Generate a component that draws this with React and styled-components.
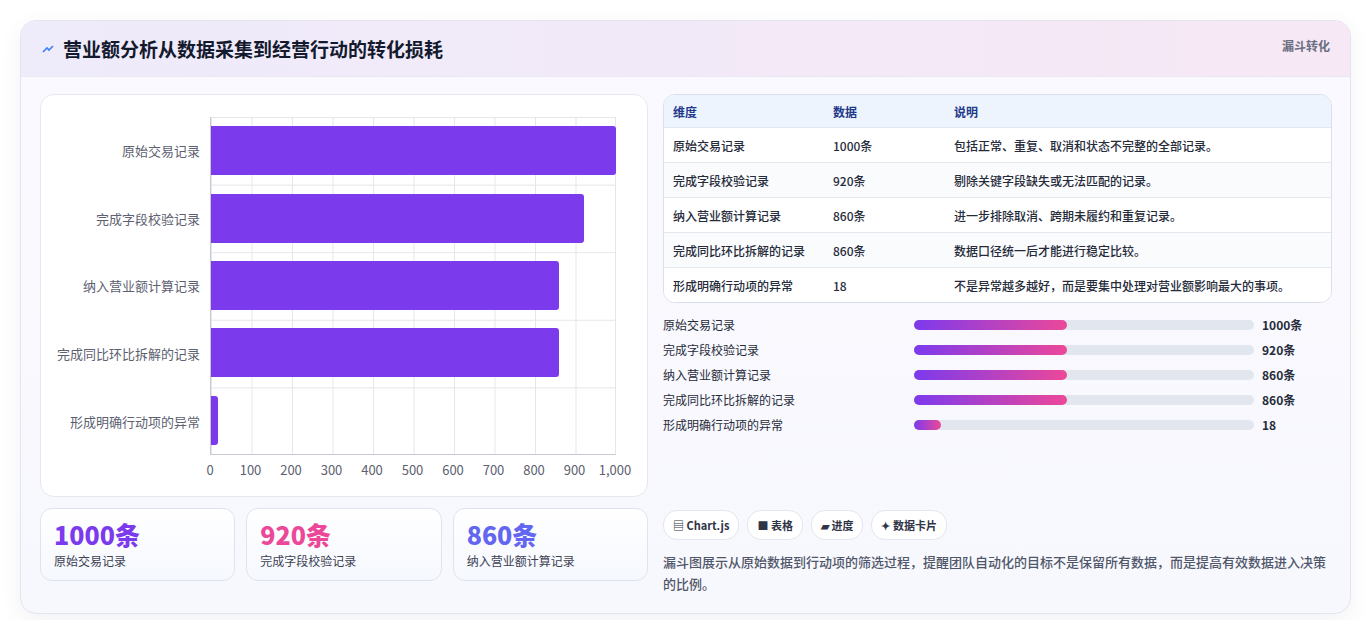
import React from 'react';
import styled, { createGlobalStyle } from 'styled-components';

const Global = createGlobalStyle`
  body { margin: 0; background: #fff; font-family: "Noto Sans CJK SC", "Noto Sans", sans-serif; }
`;

const rows = [
  { name: '原始交易记录', value: 1000, unit: '1000条', note: '包括正常、重复、取消和状态不完整的全部记录。', pct: 45 },
  { name: '完成字段校验记录', value: 920, unit: '920条', note: '剔除关键字段缺失或无法匹配的记录。', pct: 45 },
  { name: '纳入营业额计算记录', value: 860, unit: '860条', note: '进一步排除取消、跨期未履约和重复记录。', pct: 45 },
  { name: '完成同比环比拆解的记录', value: 860, unit: '860条', note: '数据口径统一后才能进行稳定比较。', pct: 45 },
  { name: '形成明确行动项的异常', value: 18, unit: '18', note: '不是异常越多越好，而是要集中处理对营业额影响最大的事项。', pct: 8 },
];

const Page = styled.div`
  padding: 20px 21px 20px 20px;
`;

const Card = styled.div`
  border: 1px solid #e4e4f0;
  border-radius: 16px;
  background: linear-gradient(180deg, #faf9ff, #f7f8fd);
  box-shadow: 0 6px 20px rgba(90, 90, 140, 0.08);
  overflow: hidden;
`;

const Header = styled.div`
  height: 55px;
  display: flex;
  align-items: center;
  justify-content: space-between;
  padding: 0 20px;
  background: linear-gradient(90deg, #eeebfb, #f7e8f5);
  border-bottom: 1px solid #ebe7f5;
`;

const Title = styled.h1`
  margin: 0;
  font-size: 19px;
  font-weight: 700;
  color: #141a2e;
  display: flex;
  align-items: center;
  gap: 8px;
`;

const Tag = styled.span`
  font-size: 12px;
  font-weight: 700;
  color: #6b6f80;
  align-self: flex-start;
  margin-top: 16px;
`;

const Body = styled.div`
  display: grid;
  grid-template-columns: 608px 1fr;
  gap: 15px;
  padding: 17px 18px 18px 19px;
`;

const Col = styled.div`
  display: flex;
  flex-direction: column;
`;

const ChartCard = styled.div`
  height: 403px;
  background: #fff;
  border: 1px solid #e6e8f0;
  border-radius: 14px;
  box-sizing: border-box;
  display: grid;
  grid-template-columns: 169px 406px;
  grid-template-rows: 338px 20px;
  padding-top: 22px;
`;

const Labels = styled.div`
  display: grid;
  grid-template-rows: repeat(5, 1fr);
  padding-right: 10px;
`;

const Label = styled.div`
  display: flex;
  align-items: center;
  justify-content: flex-end;
  font-size: 13px;
  color: #5c6070;
`;

const Plot = styled.div`
  position: relative;
  border-left: 1px solid #c8cad2;
  border-bottom: 1px solid #c8cad2;
  background-image:
    linear-gradient(90deg, #e5e6ea 1px, transparent 1px),
    linear-gradient(180deg, #e5e6ea 1px, transparent 1px);
  background-size: 40.5px 100%, 100% 67.6px;
  display: grid;
  grid-template-rows: repeat(5, 1fr);
  border-right: 1px solid #e5e6ea;
`;

const BarRow = styled.div`
  display: flex;
  align-items: center;
`;

const Bar = styled.div`
  height: 49px;
  background: #7c3aed;
  border-radius: 0 3px 3px 0;
`;

const Axis = styled.div`
  grid-column: 2;
  position: relative;
  font-size: 13px;
  color: #5c6070;
`;

const Tick = styled.span`
  position: absolute;
  top: 5px;
  transform: translateX(-50%);
`;

const Stats = styled.div`
  display: grid;
  grid-template-columns: repeat(3, 1fr);
  gap: 11px;
  margin-top: 11px;
`;

const Stat = styled.div`
  height: 73px;
  box-sizing: border-box;
  border: 1px solid #dfe3ee;
  border-radius: 12px;
  background: linear-gradient(180deg, #fff, #f5f8fe);
  padding: 9px 13px;
`;

const StatValue = styled.div`
  font-size: 25px;
  font-weight: 800;
  line-height: 32px;
  color: ${p => p.$color};
`;

const StatLabel = styled.div`
  font-size: 12px;
  color: #3c4152;
  margin-top: 2px;
`;

const Table = styled.div`
  border: 1px solid #d9dfec;
  border-radius: 12px;
  overflow: hidden;
  background: #fff;
`;

const TRow = styled.div`
  display: grid;
  grid-template-columns: 160px 121px 1fr;
  height: 35px;
  align-items: center;
  padding-left: 9px;
  font-size: 12px;
  color: ${p => (p.$head ? '#1e3a8a' : '#262b3a')};
  font-weight: ${p => (p.$head ? 700 : 500)};
  background: ${p => (p.$head ? '#eef4fe' : p.$alt ? '#fafbfd' : '#fff')};
  border-top: ${p => (p.$first ? 'none' : '1px solid #e3e7ef')};
  height: ${p => (p.$head ? '32px' : '34px')};
`;

const Progress = styled.div`
  display: flex;
  flex-direction: column;
  gap: 6px;
  margin-top: 12px;
`;

const PRow = styled.div`
  display: grid;
  grid-template-columns: 251px 348px 1fr;
  align-items: center;
  gap: 0;
  font-size: 12px;
  color: #262b3a;
  height: 19px;
`;

const Track = styled.div`
  height: 10px;
  border-radius: 5px;
  background: #e2e7ef;
  margin-right: 8px;
`;

const Fill = styled.div`
  height: 100%;
  border-radius: 5px;
  background: linear-gradient(90deg, #7c3aed, #ec4899);
`;

const PVal = styled.span`
  font-weight: 700;
`;

const Chips = styled.div`
  display: flex;
  gap: 8px;
  margin-top: 76px;
`;

const Chip = styled.span`
  height: 28px;
  padding: 0 9px;
  border: 1px solid #e3e6ee;
  border-radius: 14px;
  background: #fff;
  display: flex;
  align-items: center;
  gap: 4px;
  font-size: 11px;
  font-weight: 700;
  color: #2f3446;
`;

const Desc = styled.p`
  margin: 11px 0 0;
  font-size: 13px;
  line-height: 22px;
  color: #505669;
  font-weight: 500;
`;

const colors = ['#7c3aed', '#ec4899', '#6366f1'];

export default function App() {
  return (
    <Page>
      <Global />
      <Card>
        <Header>
          <Title>
            <svg width="14" height="14" viewBox="0 0 14 14">
              <path d="M2 10 L6 6 L8 8 L12 4" stroke="#3b82f6" strokeWidth="1.6" fill="none" />
            </svg>
            营业额分析从数据采集到经营行动的转化损耗
          </Title>
          <Tag>漏斗转化</Tag>
        </Header>
        <Body>
          <Col>
            <ChartCard>
              <Labels>
                {rows.map(r => <Label key={r.name}>{r.name}</Label>)}
              </Labels>
              <Plot>
                {rows.map(r => (
                  <BarRow key={r.name}>
                    <Bar style={{ width: `${r.value * 0.405}px` }} />
                  </BarRow>
                ))}
              </Plot>
              <Axis>
                {Array.from({ length: 11 }, (_, i) => (
                  <Tick key={i} style={{ left: `${i * 40.5}px` }}>
                    {i === 10 ? '1,000' : i * 100}
                  </Tick>
                ))}
              </Axis>
            </ChartCard>
            <Stats>
              {rows.slice(0, 3).map((r, i) => (
                <Stat key={r.name}>
                  <StatValue $color={colors[i]}>{r.unit}</StatValue>
                  <StatLabel>{r.name}</StatLabel>
                </Stat>
              ))}
            </Stats>
          </Col>
          <Col>
            <Table>
              <TRow $head $first><span>维度</span><span>数据</span><span>说明</span></TRow>
              {rows.map((r, i) => (
                <TRow key={r.name} $alt={i % 2 === 1}>
                  <span>{r.name}</span><span>{r.unit}</span><span>{r.note}</span>
                </TRow>
              ))}
            </Table>
            <Progress>
              {rows.map(r => (
                <PRow key={r.name}>
                  <span>{r.name}</span>
                  <Track><Fill style={{ width: `${r.pct}%` }} /></Track>
                  <PVal>{r.unit}</PVal>
                </PRow>
              ))}
            </Progress>
            <Chips>
              <Chip>▤ Chart.js</Chip>
              <Chip>■ 表格</Chip>
              <Chip>▰ 进度</Chip>
              <Chip>✦ 数据卡片</Chip>
            </Chips>
            <Desc>漏斗图展示从原始数据到行动项的筛选过程，提醒团队自动化的目标不是保留所有数据，而是提高有效数据进入决策的比例。</Desc>
          </Col>
        </Body>
      </Card>
    </Page>
  );
}
